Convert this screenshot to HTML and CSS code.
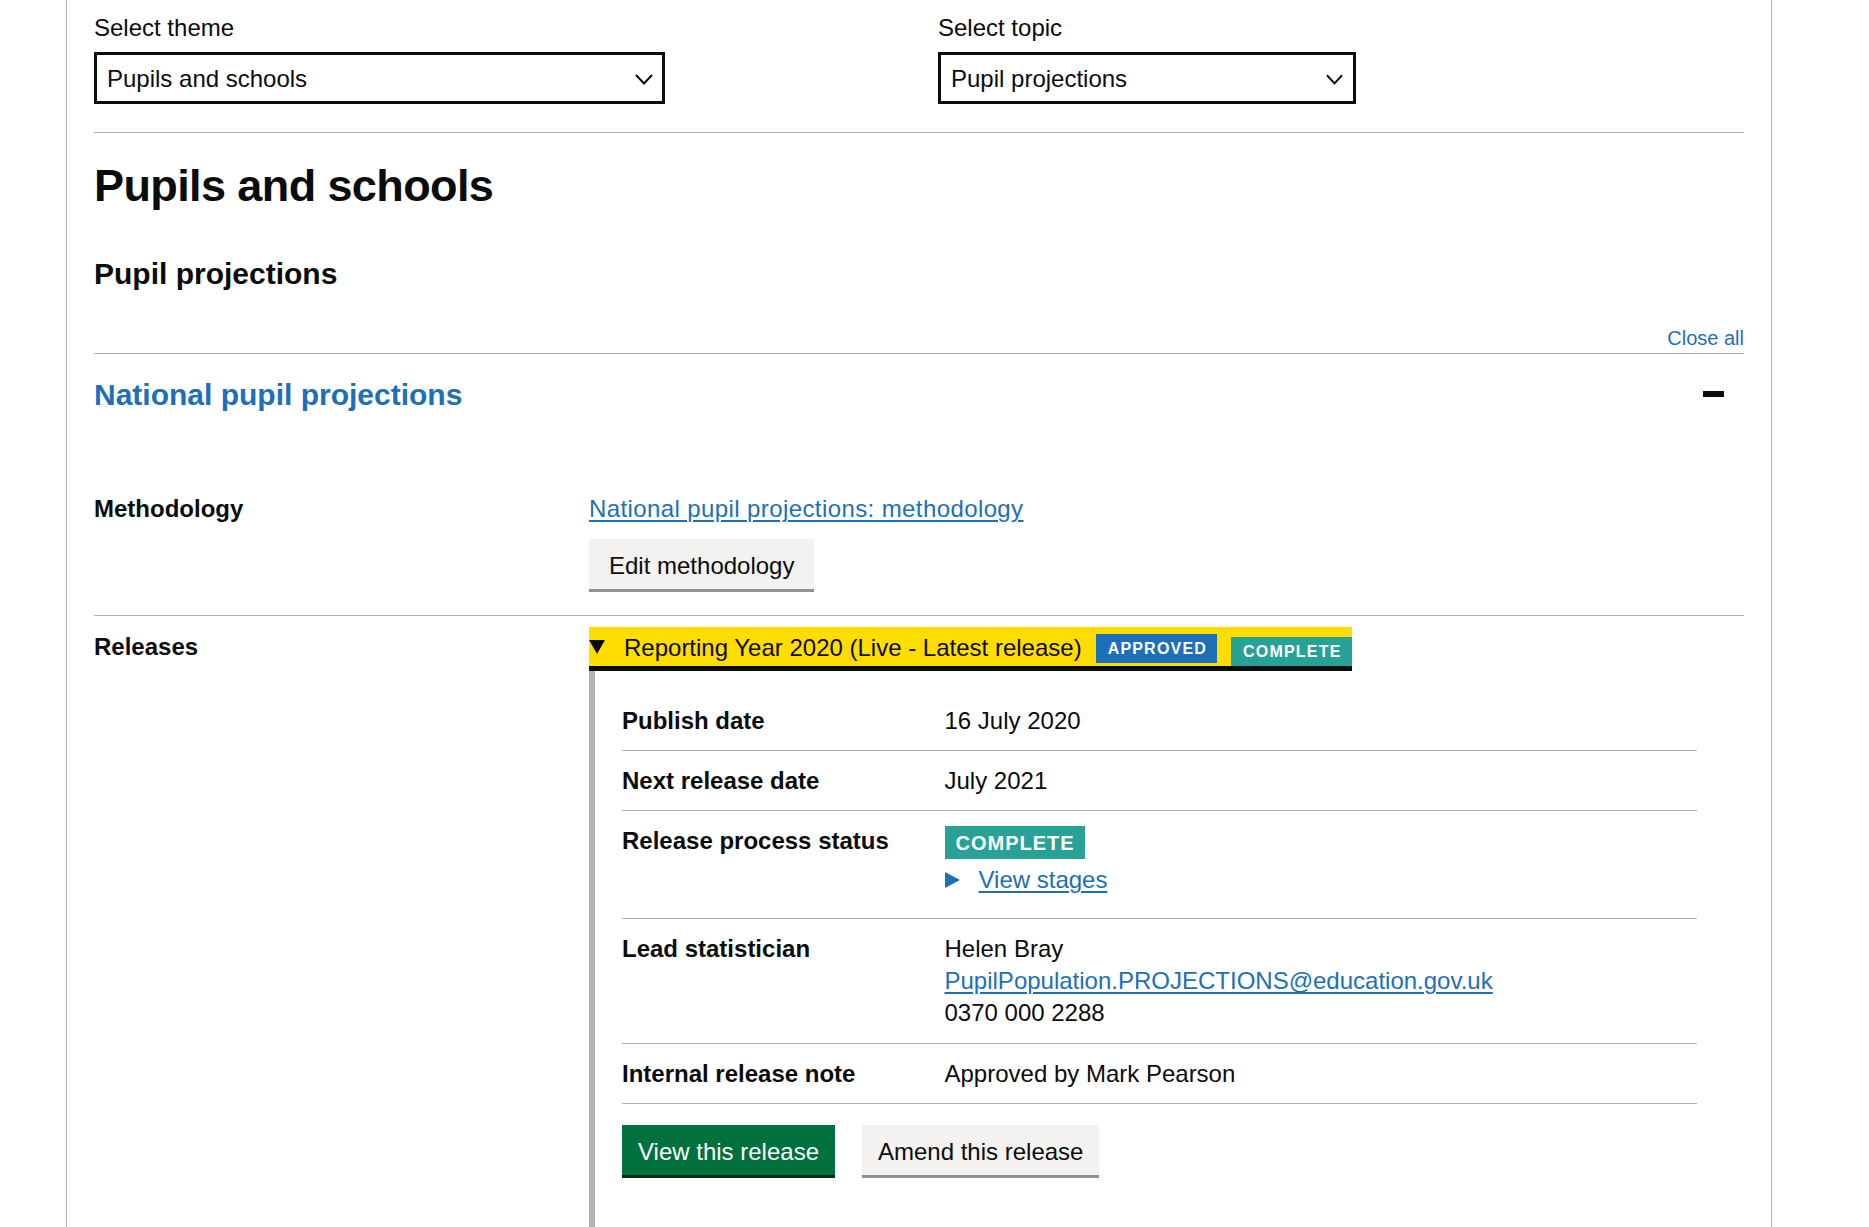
FILE: index.html
```html
<!DOCTYPE html>
<html lang="en">
<head>
<meta charset="utf-8">
<title>Pupils and schools</title>
<link rel="stylesheet" href="styles.css">
</head>
<body>
<div class="page">
  <div class="filters">
    <div class="field">
      <label class="label">Select theme</label>
      <div class="select select--theme">
        <span class="select-text">Pupils and schools</span>
        <svg class="chevron" viewBox="0 0 18 11" width="18" height="11"><polyline points="1,1 9,9.5 17,1" fill="none" stroke="#0b0c0c" stroke-width="2"/></svg>
      </div>
    </div>
    <div class="field">
      <label class="label">Select topic</label>
      <div class="select select--topic">
        <span class="select-text">Pupil projections</span>
        <svg class="chevron" viewBox="0 0 18 11" width="17" height="11"><polyline points="1,1 9,9.5 17,1" fill="none" stroke="#0b0c0c" stroke-width="2"/></svg>
      </div>
    </div>
  </div>

  <hr class="rule">

  <h1 class="heading-l">Pupils and schools</h1>
  <h2 class="heading-m">Pupil projections</h2>

  <div class="accordion">
    <div class="accordion-controls"><a class="close-all" href="#">Close all</a></div>
    <div class="section">
      <div class="section-header">
        <h3 class="section-title">National pupil projections</h3>
        <span class="minus"></span>
      </div>
      <div class="section-content">
        <div class="row row--methodology">
          <div class="key">Methodology</div>
          <div class="value">
            <a class="link link--method" href="#">National pupil projections: methodology</a>
            <div class="btn-row"><button class="btn btn--secondary btn--edit">Edit methodology</button></div>
          </div>
        </div>
        <div class="row row--releases">
          <div class="key">Releases</div>
          <div class="value">
            <div class="details">
              <div class="summary">
                <svg class="tri-down" viewBox="0 0 16 14" width="16" height="14"><polygon points="0,0 16,0 8,14" fill="#0b0c0c"/></svg>
                <span class="summary-text">Reporting Year 2020 (Live - Latest release)</span>
                <span class="tag tag--blue tag--approved">APPROVED</span>
                <span class="tag tag--green tag--complete">COMPLETE</span>
              </div>
              <div class="details-body">
                <dl class="summary-list">
                  <div class="sl-row">
                    <dt class="sl-key">Publish date</dt>
                    <dd class="sl-value">16 July 2020</dd>
                  </div>
                  <div class="sl-row">
                    <dt class="sl-key">Next release date</dt>
                    <dd class="sl-value">July 2021</dd>
                  </div>
                  <div class="sl-row">
                    <dt class="sl-key">Release process status</dt>
                    <dd class="sl-value">
                      <span class="tag-large">COMPLETE</span>
                      <div class="view-stages">
                        <svg class="tri-right" viewBox="0 0 15 16" width="15" height="16"><polygon points="0,0 15,8 0,16" fill="#1d70b8"/></svg>
                        <a class="link" href="#">View stages</a>
                      </div>
                    </dd>
                  </div>
                  <div class="sl-row">
                    <dt class="sl-key">Lead statistician</dt>
                    <dd class="sl-value sl-value--contact">
                      <div>Helen Bray</div>
                      <div><a class="link" href="#">PupilPopulation.PROJECTIONS@education.gov.uk</a></div>
                      <div>0370 000 2288</div>
                    </dd>
                  </div>
                  <div class="sl-row">
                    <dt class="sl-key">Internal release note</dt>
                    <dd class="sl-value">Approved by Mark Pearson</dd>
                  </div>
                </dl>
                <div class="button-group">
                  <button class="btn btn--primary">View this release</button>
                  <button class="btn btn--secondary">Amend this release</button>
                </div>
              </div>
            </div>
          </div>
        </div>
      </div>
    </div>
  </div>
</div>
</body>
</html>
```

FILE: styles.css
```css
html {
  overflow: hidden;
}

body {
  margin: 0;
  font-family: "Liberation Sans", Arial, sans-serif;
  color: #0b0c0c;
  background: #ffffff;
  font-size: 24px;
  line-height: 31px;
}

.page {
  box-sizing: border-box;
  width: 1706px;
  min-height: 100vh;
  margin-left: 66px;
  border-left: 1px solid #b1b4b6;
  border-right: 1px solid #b1b4b6;
  padding: 12px 27px 0 27px;
}

/* Filters */
.filters {
  display: grid;
  grid-template-columns: 1fr 1fr;
  column-gap: 38px;
}

.label {
  display: block;
  font-size: 24px;
  line-height: 31px;
  margin-bottom: 9px;
}

.select {
  box-sizing: border-box;
  height: 52px;
  border: 3px solid #0b0c0c;
  display: flex;
  align-items: center;
  padding: 0 9px 0 10px;
}

.select--theme {
  width: 571px;
}

.select--topic {
  width: 418px;
  padding-right: 10px;
}

.select-text {
  line-height: 31px;
}

.chevron {
  margin-left: auto;
  margin-top: 2px;
}

.rule {
  border: 0;
  border-top: 1px solid #b1b4b6;
  margin: 28px 0 28px 0;
  height: 0;
}

.heading-l {
  font-size: 45px;
  line-height: 50px;
  font-weight: 700;
  letter-spacing: -0.6px;
  margin: 0 0 44px 0;
}

.heading-m {
  font-size: 30px;
  line-height: 37.5px;
  font-weight: 700;
  margin: 0 0 33px 0;
}

/* Accordion */
.accordion-controls {
  display: flex;
  justify-content: flex-end;
  margin-bottom: 2px;
}

.close-all {
  font-size: 20px;
  line-height: 25px;
  color: #1d70b8;
  text-decoration: none;
}

.section {
  border-top: 1px solid #b1b4b6;
}

.section-header {
  display: flex;
  align-items: center;
  justify-content: space-between;
  padding: 22px 0 19px 0;
}

.section-title {
  margin: 0;
  font-size: 30px;
  line-height: 37.5px;
  font-weight: 700;
  color: #1d70b8;
}

.minus {
  display: block;
  width: 21px;
  height: 6px;
  background: #0b0c0c;
  margin-right: 20px;
}

.section-content {
  padding-top: 46px;
}

.row {
  display: grid;
  grid-template-columns: 30% 70%;
  padding: 15px 0 26px 0;
  border-bottom: 1px solid #b1b4b6;
}

.row--methodology {
  padding-bottom: 26px;
}

.row--releases {
  border-bottom: 0;
  padding-bottom: 0;
}

.key {
  font-weight: 700;
}

.link {
  color: #1d70b8;
  text-decoration: underline;
  text-decoration-thickness: 2px;
  text-underline-offset: 3px;
}

.link--method {
  letter-spacing: 0.4px;
}

.btn-row {
  margin-top: 15px;
}

/* Buttons */
.btn {
  font: inherit;
  font-size: 24px;
  line-height: 31px;
  border: 0;
  border-radius: 0;
  padding: 11px 16px 8px 16px;
  margin: 0;
  cursor: pointer;
}

.btn--primary {
  background: #00703c;
  color: #ffffff;
  box-shadow: 0 3px 0 #002d18;
}

.btn--secondary {
  background: #f3f2f1;
  color: #0b0c0c;
  box-shadow: 0 3px 0 #929191;
}

.btn--edit {
  padding-left: 20px;
  padding-right: 20px;
}

/* Details */
.details {
  margin-top: -4px;
}

.summary {
  display: flex;
  align-items: flex-start;
  width: fit-content;
  background: #ffdd00;
  box-shadow: 0 5px 0 #0b0c0c;
}

.tri-down {
  margin-top: 13px;
  flex: none;
}

.summary-text {
  padding: 5px 0 3px 0;
  margin-left: 19px;
  line-height: 31px;
}

.tag {
  display: inline-block;
  font-size: 16px;
  line-height: 20px;
  font-weight: 700;
  letter-spacing: 1.2px;
  padding: 5px 10px 4px 12px;
  color: #ffffff;
  margin-left: 14px;
}

.tag--blue {
  background: #1d70b8;
}

.tag--green {
  background: #28a197;
}

.tag--approved {
  margin-top: 7px;
}

.tag--complete {
  margin-top: 10px;
}

.details-body {
  margin-top: 5px;
  border-left: 6px solid #b1b4b6;
  padding: 20px 47px 80px 27px;
}

.summary-list {
  margin: 0;
}

.sl-row {
  display: grid;
  grid-template-columns: 30% 70%;
  padding: 14px 0;
  border-bottom: 1px solid #b1b4b6;
}

.sl-key {
  font-weight: 700;
  margin: 0;
}

.sl-value {
  margin: 0;
}

.sl-value--contact {
  line-height: 32px;
}

.tag-large {
  display: inline-block;
  font-size: 20px;
  line-height: 23px;
  font-weight: 700;
  letter-spacing: 1px;
  padding: 6px 10px 4px 11px;
  color: #ffffff;
  background: #28a197;
  margin-top: 1px;
}

.view-stages {
  display: flex;
  align-items: center;
  margin-top: 5px;
  margin-bottom: 9px;
}

.tri-right {
  flex: none;
  margin-right: 19px;
}

.button-group {
  display: flex;
  gap: 27px;
  margin-top: 21px;
}
```
